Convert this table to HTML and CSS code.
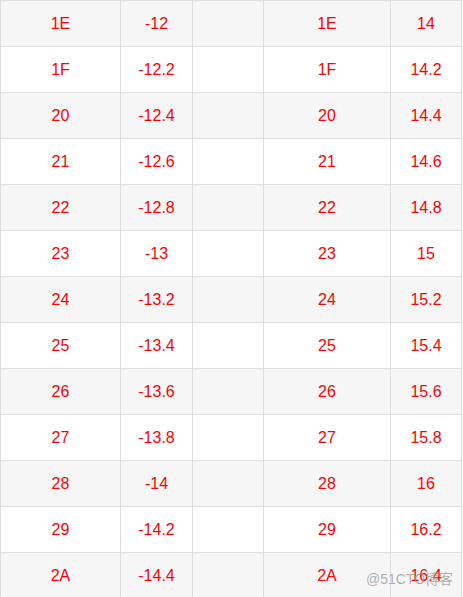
FILE: index.html
```html
<!DOCTYPE html>
<html>
<head>
<meta charset="utf-8">
<link rel="stylesheet" href="styles.css">
</head>
<body>
<div class="sheet">
  <div class="grid">
    <div class="c">1E</div><div class="c">-12</div><div class="c"></div><div class="c">1E</div><div class="c">14</div>
    <div class="c w">1F</div><div class="c w">-12.2</div><div class="c w"></div><div class="c w">1F</div><div class="c w">14.2</div>
    <div class="c">20</div><div class="c">-12.4</div><div class="c"></div><div class="c">20</div><div class="c">14.4</div>
    <div class="c w">21</div><div class="c w">-12.6</div><div class="c w"></div><div class="c w">21</div><div class="c w">14.6</div>
    <div class="c">22</div><div class="c">-12.8</div><div class="c"></div><div class="c">22</div><div class="c">14.8</div>
    <div class="c w">23</div><div class="c w">-13</div><div class="c w"></div><div class="c w">23</div><div class="c w">15</div>
    <div class="c">24</div><div class="c">-13.2</div><div class="c"></div><div class="c">24</div><div class="c">15.2</div>
    <div class="c w">25</div><div class="c w">-13.4</div><div class="c w"></div><div class="c w">25</div><div class="c w">15.4</div>
    <div class="c">26</div><div class="c">-13.6</div><div class="c"></div><div class="c">26</div><div class="c">15.6</div>
    <div class="c w">27</div><div class="c w">-13.8</div><div class="c w"></div><div class="c w">27</div><div class="c w">15.8</div>
    <div class="c">28</div><div class="c">-14</div><div class="c"></div><div class="c">28</div><div class="c">16</div>
    <div class="c w">29</div><div class="c w">-14.2</div><div class="c w"></div><div class="c w">29</div><div class="c w">16.2</div>
    <div class="c">2A</div><div class="c">-14.4</div><div class="c"></div><div class="c">2A</div><div class="c">16.4</div>
  </div>
  <div class="watermark">@51CTO博客</div>
</div>
</body>
</html>
```

FILE: styles.css
```css
html, body {
  margin: 0;
  padding: 0;
  background: #fff;
  overflow: hidden;
}
.sheet {
  position: relative;
  width: 463px;
  height: 597px;
  overflow: hidden;
}
.grid {
  display: grid;
  grid-template-columns: 120px 72px 71px 127px 71px;
  width: 462px;
  border-top: 1px solid #dedede;
  border-left: 1px solid #dedede;
  box-sizing: border-box;
  width: max-content;
}
.c {
  height: 46px;
  box-sizing: border-box;
  border-right: 1px solid #dedede;
  border-bottom: 1px solid #dedede;
  background: #f6f6f6;
  color: #f00;
  font-family: "Liberation Sans", Arial, sans-serif;
  font-size: 16px;
  display: flex;
  align-items: center;
  justify-content: center;
}
.c.w {
  background: #fff;
}
.watermark {
  position: absolute;
  left: 366px;
  top: 570px;
  font-family: "Liberation Sans", "Noto Sans CJK SC", sans-serif;
  font-size: 14px;
  line-height: 18px;
  color: rgba(150, 150, 150, 0.75);
}
```
